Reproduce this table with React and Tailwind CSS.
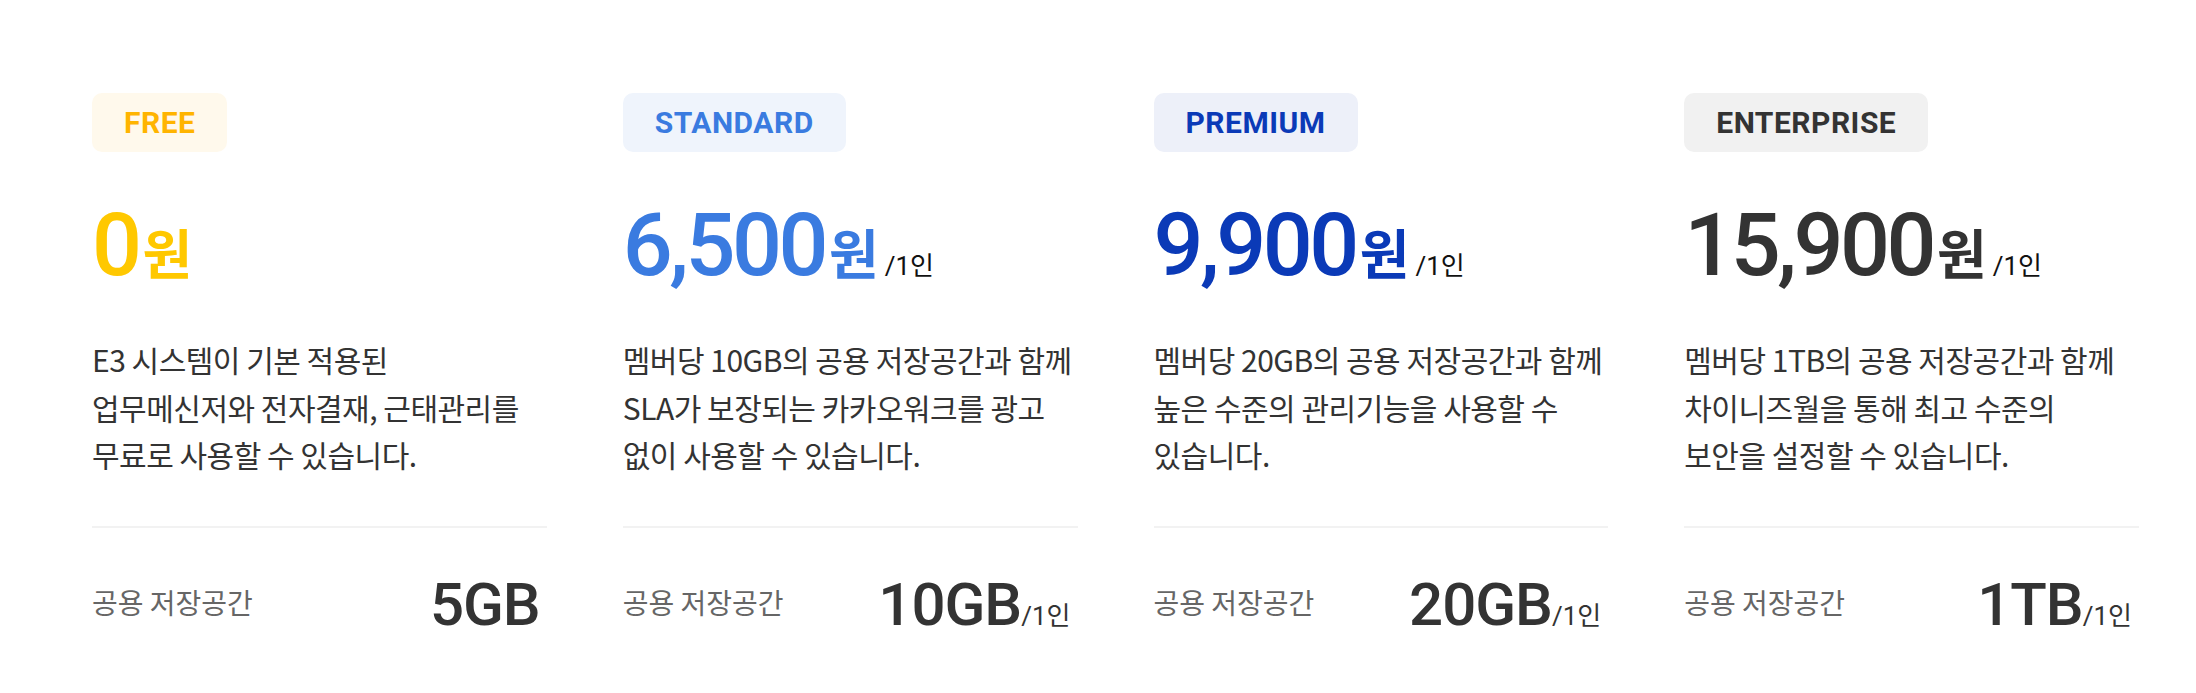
const plans = [
  {
    name: 'FREE',
    badge: 'bg-[#fff9ec] text-[#ffb400]',
    price: '0',
    priceColor: 'text-[#ffc800]',
    perUser: false,
    lines: ['E3 시스템이 기본 적용된', '업무메신저와 전자결재, 근태관리를', '무료로 사용할 수 있습니다.'],
    storage: '5GB',
  },
  {
    name: 'STANDARD',
    badge: 'bg-[#eff4fc] text-[#3a7be0]',
    price: '6,500',
    priceColor: 'text-[#3a7be0]',
    perUser: true,
    lines: ['멤버당 10GB의 공용 저장공간과 함께', 'SLA가 보장되는 카카오워크를 광고', '없이 사용할 수 있습니다.'],
    storage: '10GB',
  },
  {
    name: 'PREMIUM',
    badge: 'bg-[#edf0f9] text-[#0b3ab7]',
    price: '9,900',
    priceColor: 'text-[#0b3ab7]',
    perUser: true,
    lines: ['멤버당 20GB의 공용 저장공간과 함께', '높은 수준의 관리기능을 사용할 수', '있습니다.'],
    storage: '20GB',
  },
  {
    name: 'ENTERPRISE',
    badge: 'bg-[#f1f1f1] text-[#333333]',
    price: '15,900',
    priceColor: 'text-[#333333]',
    perUser: true,
    lines: ['멤버당 1TB의 공용 저장공간과 함께', '차이니즈월을 통해 최고 수준의', '보안을 설정할 수 있습니다.'],
    storage: '1TB',
  },
]

function PlanColumn({ plan }) {
  return (
    <div className="flex flex-col">
      {/* Plan badge */}
      <div
        className={`self-start h-[59px] px-8 rounded-[10px] flex items-center font-['Roboto',sans-serif] font-bold text-[30px] leading-none tracking-[0.5px] ${plan.badge}`}
      >
        {plan.name}
      </div>

      {/* Price */}
      <div className={`mt-[49px] flex items-baseline ${plan.priceColor}`}>
        <span className="font-['Roboto',sans-serif] font-medium text-[88px] leading-none tracking-[-3.5px]">
          {plan.price}
        </span>
        <span className="ml-[4px] font-['Noto_Sans_CJK_KR',sans-serif] font-bold text-[54px] leading-none">
          원
        </span>
        {plan.perUser && (
          <span className="ml-[6px] font-['Roboto','Noto_Sans_CJK_KR',sans-serif] text-[26px] leading-none text-[#111111]">
            /1인
          </span>
        )}
      </div>

      {/* Description */}
      <p className="mt-[47px] font-['Noto_Sans_CJK_KR',sans-serif] text-[30px] leading-[47.5px] tracking-[-0.5px] text-[#333333]">
        {plan.lines.map((line, i) => (
          <span key={i} className="block whitespace-nowrap">
            {line}
          </span>
        ))}
      </p>

      <div className="mt-[47.5px] h-[2px] bg-[#f2f2f2]" />

      {/* Storage */}
      <div className="mt-[46.5px] pr-[7px] flex items-center justify-between">
        <span className="mb-[6px] font-['Noto_Sans_CJK_KR',sans-serif] text-[28px] leading-none text-[#666666]">
          공용 저장공간
        </span>
        <div className="flex items-baseline text-[#333333]">
          <span className="font-['Roboto',sans-serif] font-medium text-[60px] leading-none tracking-[-1px]">
            {plan.storage}
          </span>
          {plan.perUser && (
            <span className="font-['Roboto','Noto_Sans_CJK_KR',sans-serif] text-[26px] leading-none">
              /1인
            </span>
          )}
        </div>
      </div>
    </div>
  )
}

export default function App() {
  return (
    <div className="w-[2196px] h-[693px] overflow-hidden bg-white pt-[93px] pl-[92px]">
      <div className="grid grid-cols-4 w-[2047px] gap-x-[76px]">
        {plans.map(plan => (
          <PlanColumn key={plan.name} plan={plan} />
        ))}
      </div>
    </div>
  )
}
